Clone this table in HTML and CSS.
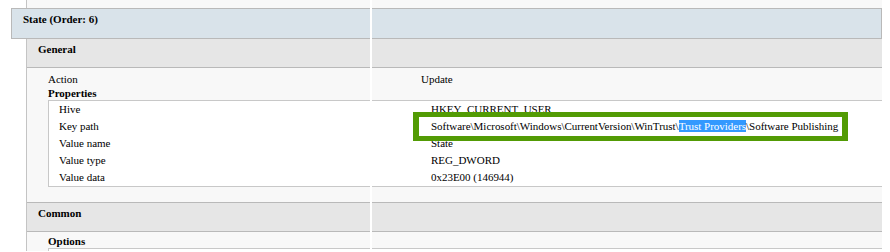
FILE: index.html
```html
<!DOCTYPE html>
<html>
<head>
<meta charset="utf-8">
<link rel="stylesheet" href="styles.css">
</head>
<body>
<div class="page">
  <div class="prev-tail"></div>
  <div class="state-head">State (Order: 6)</div>
  <div class="section">
    <div class="sec-head">General</div>
    <div class="sec-body general">
      <div class="row"><span class="lbl">Action</span><span class="val">Update</span></div>
      <div class="sub-title">Properties</div>
      <div class="props">
        <div class="prow"><span>Hive</span><span>HKEY_CURRENT_USER</span></div>
        <div class="prow"><span>Key path</span><span>Software\Microsoft\Windows\CurrentVersion\WinTrust\<span class="sel">Trust Providers</span>\Software Publishing</span></div>
        <div class="prow"><span>Value name</span><span>State</span></div>
        <div class="prow"><span>Value type</span><span>REG_DWORD</span></div>
        <div class="prow"><span>Value data</span><span>0x23E00 (146944)</span></div>
      </div>
    </div>
    <div class="sec-head">Common</div>
    <div class="sec-body common">
      <div class="sub-title">Options</div>
      <div class="props empty"></div>
    </div>
  </div>
</div>
<div class="col-gap"></div>
<div class="callout"></div>
</body>
</html>
```
FILE: styles.css
```css
html, body {
  margin: 0;
  padding: 0;
  background: #ffffff;
}
body {
  position: relative;
  height: 252px;
  overflow: hidden;
  font-family: "Liberation Serif", "Times New Roman", serif;
  font-size: 11px;
  letter-spacing: -0.02px;
  color: #000000;
}
.page {
  margin-left: 11px;
  width: 871px;
}
.prev-tail {
  height: 8px;
  margin-left: 15px;
  background: #f8f8f8;
  border-left: 1px solid #c4c4c4;
}
.state-head {
  background: #d9e3ea;
  border: 1px solid #b9b9b9;
  padding: 3px 0 0 11px;
  height: 26px;
  line-height: 14px;
  font-weight: bold;
}
.section {
  margin-left: 15px;
  border-left: 1px solid #c4c4c4;
}
.sec-head {
  background: #e6e6e6;
  border-bottom: 1px solid #b9b9b9;
  height: 25px;
  padding: 3px 0 0 11px;
  line-height: 14px;
  font-weight: bold;
}
.sec-body {
  background: #f8f8f8;
  border-bottom: 1px solid #b9b9b9;
  padding: 4px 0 15px 21px;
}
.sec-body.common {
  padding-top: 2px;
  padding-bottom: 0;
  border-bottom: none;
}
.row {
  display: grid;
  grid-template-columns: 373px 1fr;
  line-height: 14px;
}
.sub-title {
  font-weight: bold;
  line-height: 14px;
}
.props {
  background: #ffffff;
  border: 1px solid #c8c8c8;
  border-right: none;
}
.props.empty {
  height: 2px;
  border-bottom: none;
}
.prow {
  display: grid;
  grid-template-columns: 372px 1fr;
  line-height: 17px;
  padding-left: 10px;
  white-space: nowrap;
}
.sel {
  background: #3399ff;
  color: #ffffff;
}
.col-gap {
  position: absolute;
  left: 370px;
  top: 0;
  width: 2px;
  height: 252px;
  background: #ffffff;
}
.callout {
  position: absolute;
  left: 413px;
  top: 112px;
  width: 435px;
  height: 29px;
  box-sizing: border-box;
  border-style: solid;
  border-color: #529b04;
  border-width: 5px 6px;
}
```
